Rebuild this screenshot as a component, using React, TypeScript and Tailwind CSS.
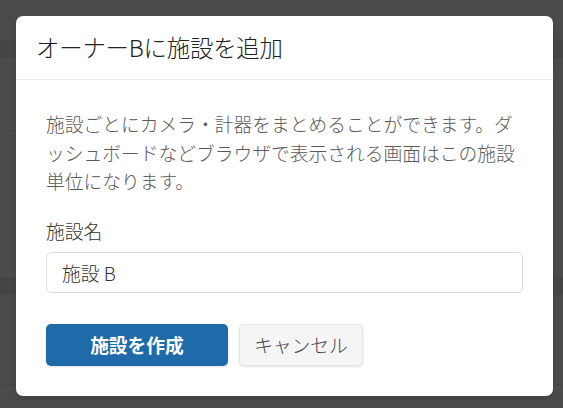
import React from 'react';

const font = {fontFamily: '"Noto Sans CJK JP", "Noto Sans", sans-serif'};

function Backdrop() {
  return (
    <div className="flex flex-col h-full">
      <div className="h-[40px] bg-[#4a4a4a]" />
      <div className="h-[18px] bg-[#444545]" />
      <div className="h-[73px] bg-[#4b4b4b] border-b border-[#454545]" />
      <div className="h-[146px] bg-[#4b4b4b]" />
      <div className="h-[18px] bg-[#444545]" />
      <div className="h-[90px] bg-[#4b4b4b] border-b border-[#454545]" />
      <div className="flex-1 bg-[#4b4b4b]" />
    </div>
  );
}

export default function App() {
  return (
    <div className="relative w-[563px] h-[408px] overflow-hidden bg-[#4b4b4b]" style={font}>
      <Backdrop />
      <div className="absolute left-[16px] top-[16px] w-[537px] h-[380px] bg-white rounded-[7px] shadow-md flex flex-col">
        <div className="h-[64px] flex items-center px-[20px] border-b border-[#ebebeb]">
          <h1 className="text-[23.4px] text-[#222] font-light tracking-[-0.2px]">オーナーBに施設を追加</h1>
        </div>
        <div className="flex flex-col px-[30px] pt-[30px]">
          <p className="text-[18.75px] leading-[28.5px] text-[#5a5a5a] font-light">
            施設ごとにカメラ・計器をまとめることができます。ダッシュボードなどブラウザで表示される画面はこの施設単位になります。
          </p>
          <label className="mt-[21px] text-[18.75px] leading-[28.5px] text-[#333] font-light">施設名</label>
          <input
            className="mt-[7px] h-[41px] w-full rounded-[5px] border border-[#dcdcdc] px-[15px] text-[18.75px] text-[#333] font-light outline-none"
            defaultValue="施設 B"
            style={font}
          />
          <div className="mt-[31px] flex gap-[11px]">
            <button className="h-[42px] w-[182px] rounded-[5px] bg-[#1f6aa8] text-white font-bold text-[18.75px] shadow-sm">
              施設を作成
            </button>
            <button className="h-[42px] w-[124px] rounded-[5px] bg-[#f5f5f5] border border-[#e6e6e6] text-[#444] font-light text-[18.75px] shadow-sm">
              キャンセル
            </button>
          </div>
        </div>
      </div>
    </div>
  );
}
